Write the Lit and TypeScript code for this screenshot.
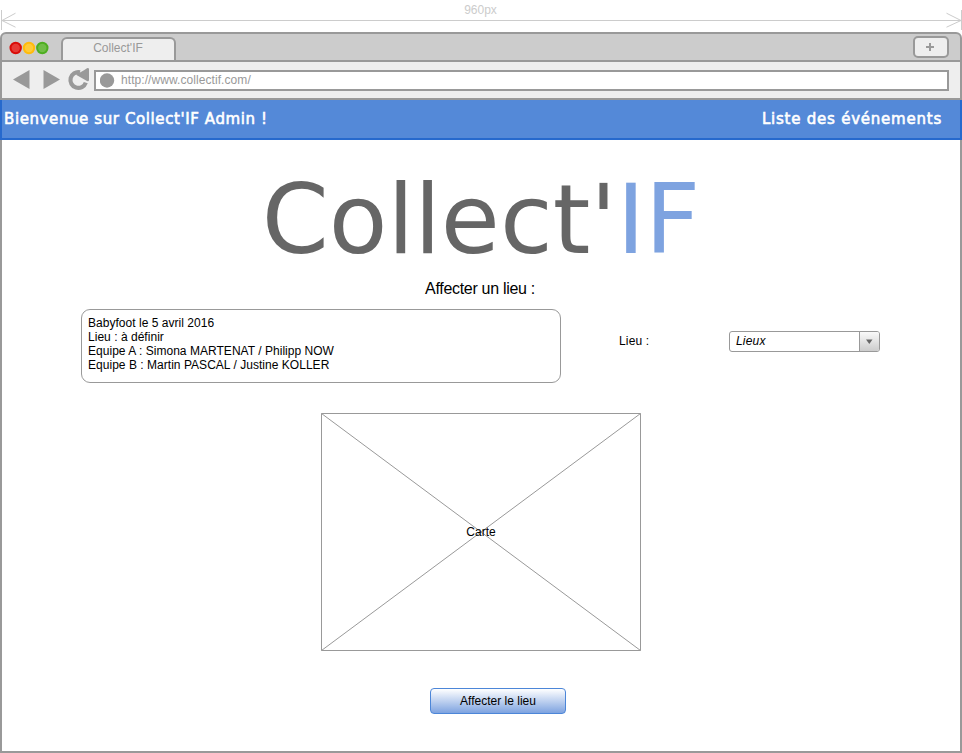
import { LitElement, html, css } from "lit";
import { customElement, property } from "lit/decorators.js";

@customElement("width-ruler")
class WidthRuler extends LitElement {
  @property() label = "";
  static styles = css`
    :host { display: block; height: 32px; position: relative; color: #ccc; }
    svg { display: block; }
    .label { position: absolute; top: 3px; left: 0; width: 961px; text-align: center; font-size: 12px; line-height: 14px; }
  `;
  render() {
    return html`
      <svg width="962" height="32" fill="none" stroke="#ccc">
        <path d="M1.5 10V30M961.5 10V30M1.5 20.5H961.5" />
        <path d="M15.5 13.2L2 20.5L15.5 27.2M946.5 13.2L961 20.5L946.5 27.2" />
      </svg>
      <span class="label">${this.label}</span>
    `;
  }
}

@customElement("browser-chrome")
class BrowserChrome extends LitElement {
  @property() tab = "";
  @property() url = "";
  static styles = css`
    :host { display: block; color: #999; font-size: 12px; }
    .tabs { box-sizing: border-box; height: 30px; display: flex; align-items: flex-end; background: #ccc;
      border: 2px solid #999; border-radius: 6px 6px 0 0; padding-left: 7px; }
    .lights { display: block; margin-bottom: 5px; }
    .tab { box-sizing: border-box; width: 115px; height: 23px; margin-left: 11px; background: #eee;
      border: 2px solid #999; border-bottom: 0; border-radius: 6px 6px 0 0; text-align: center; line-height: 18px; }
    .tab span { margin-right: 1px; }
    .plus { box-sizing: border-box; width: 36px; height: 22px; margin: 0 11px 2px auto; background: #eee;
      border: 2px solid #999; border-radius: 5px; }
    .plus svg { display: block; }
    .bar { box-sizing: border-box; height: 38px; display: flex; align-items: center; background: #eee;
      border: 2px solid #999; border-top: 0; padding: 0 11px 0 8px; }
    .url { box-sizing: border-box; flex: 1; height: 21px; display: flex; align-items: center; gap: 6px;
      background: #fff; border: 2px solid #999; padding-left: 4px; letter-spacing: 0.07px; }
  `;
  render() {
    return html`
      <div class="tabs">
        <svg class="lights" width="41" height="14" stroke-width="2">
          <circle cx="6.7" cy="7" r="5.2" fill="#e63a35" stroke="#d90c08" />
          <circle cx="20" cy="7" r="5.2" fill="#ffca38" stroke="#ffbb0b" />
          <circle cx="33.3" cy="7" r="5.2" fill="#70bd47" stroke="#4dae20" />
        </svg>
        <div class="tab"><span>${this.tab}</span></div>
        <div class="plus">
          <svg width="32" height="18" stroke="#999" stroke-width="2"><path d="M11 9H19M15 5V13" /></svg>
        </div>
      </div>
      <div class="bar">
        <svg width="84" height="30" fill="#999">
          <path d="M3 14.5L19.5 5V24Z" />
          <path d="M33.5 5V24L50 14.5Z" />
          <path d="M70 7.3A7.9 7.9 0 1 0 75.8 17.6" fill="none" stroke="#999" stroke-width="4.2" />
          <path d="M66 9.8L74 5.3L77 3.2Q79 2.6 79 4.5V15Q78.8 17 77 16Z" />
        </svg>
        <div class="url">
          <svg width="15" height="15"><circle cx="7" cy="7.5" r="7.2" fill="#999" /></svg>
          <span>${this.url}</span>
        </div>
      </div>
    `;
  }
}

@customElement("app-root")
class AppRoot extends LitElement {
  static styles = css`
    :host { display: flex; flex-direction: column; height: 753px; overflow: hidden; background: #fff;
      font: 12px/14px "Liberation Sans", Arial, sans-serif; color: #000; }
    .banner { box-sizing: border-box; height: 40px; display: flex; justify-content: space-between;
      background: #5489d8; border: 2px solid #2669cd; border-top: 0; padding: 0 18px 0 2px; color: #fff;
      font: 15px/38px "DejaVu Sans", sans-serif; -webkit-text-stroke: 0.6px #fff; }
    .welcome { letter-spacing: 0.6px; }
    .link { letter-spacing: 0.77px; }
    .page { box-sizing: border-box; flex: 1; border: 2px solid #999; border-top: 0; display: flex; flex-direction: column; }
    .logo { margin-top: 24px; height: 112px; line-height: 112px; text-align: center; white-space: nowrap;
      font-family: "DejaVu Sans", sans-serif; font-size: 96px; color: #666; }
    .logo span { color: #7ea3e0; }
    .title { margin-top: 4px; padding-right: 2px; line-height: 18px; font-size: 16px; text-align: center; letter-spacing: -0.3px; }
    .row { display: flex; align-items: flex-start; margin: 11px 0 0 79px; }
    .card { box-sizing: border-box; width: 480px; height: 74px; border: 1px solid #999; border-radius: 9px; padding: 6px;
      white-space: nowrap; letter-spacing: 0.03px; }
    .label { margin: 25px 0 0 58px; width: 110px; letter-spacing: 0.15px; }
    .select { box-sizing: border-box; width: 151px; height: 21px; margin-top: 22px; display: flex; border: 1px solid #999;
      border-radius: 3px; overflow: hidden; font-style: italic; line-height: 18px; letter-spacing: 0.2px; }
    .value { flex: 1; padding-left: 6px; }
    .arrow { width: 19px; border-left: 1px solid #999; background: linear-gradient(#fafafa, #ccc); }
    .arrow svg { display: block; }
    .map { display: grid; width: 320px; height: 238px; margin: 30px 0 0 319px; place-items: center; }
    .map > * { grid-area: 1 / 1; }
    button { box-sizing: border-box; width: 136px; height: 26px; margin: 37px 0 0 428px; padding: 0;
      border: 1px solid #4c86d8; border-radius: 4px; background: linear-gradient(#fff, #7ea3e0); font: inherit; color: #000; }
  `;
  private details = [
    "Babyfoot le 5 avril 2016",
    "Lieu : à définir",
    "Equipe A : Simona MARTENAT / Philipp NOW",
    "Equipe B : Martin PASCAL / Justine KOLLER",
  ];
  render() {
    return html`
      <width-ruler label="960px"></width-ruler>
      <browser-chrome tab="Collect'IF" url="http://www.collectif.com/"></browser-chrome>
      <div class="banner">
        <span class="welcome">Bienvenue sur Collect'IF Admin !</span>
        <span class="link">Liste des événements</span>
      </div>
      <div class="page">
        <div class="logo">Collect'<span>IF</span></div>
        <div class="title">Affecter un lieu :</div>
        <div class="row">
          <div class="card">${this.details.map((line) => html`<div>${line}</div>`)}</div>
          <div class="label">Lieu :</div>
          <div class="select">
            <div class="value">Lieux</div>
            <div class="arrow"><svg width="19" height="19"><path d="M6 7.5H12.5L9.3 12Z" fill="#666" /></svg></div>
          </div>
        </div>
        <div class="map">
          <svg width="320" height="238" fill="none" stroke="#999">
            <path d="M.5 .5H319.5V237.5H.5ZL319.5 237.5M319.5 .5L.5 237.5" />
          </svg>
          <span>Carte</span>
        </div>
        <button>Affecter le lieu</button>
      </div>
    `;
  }
}
